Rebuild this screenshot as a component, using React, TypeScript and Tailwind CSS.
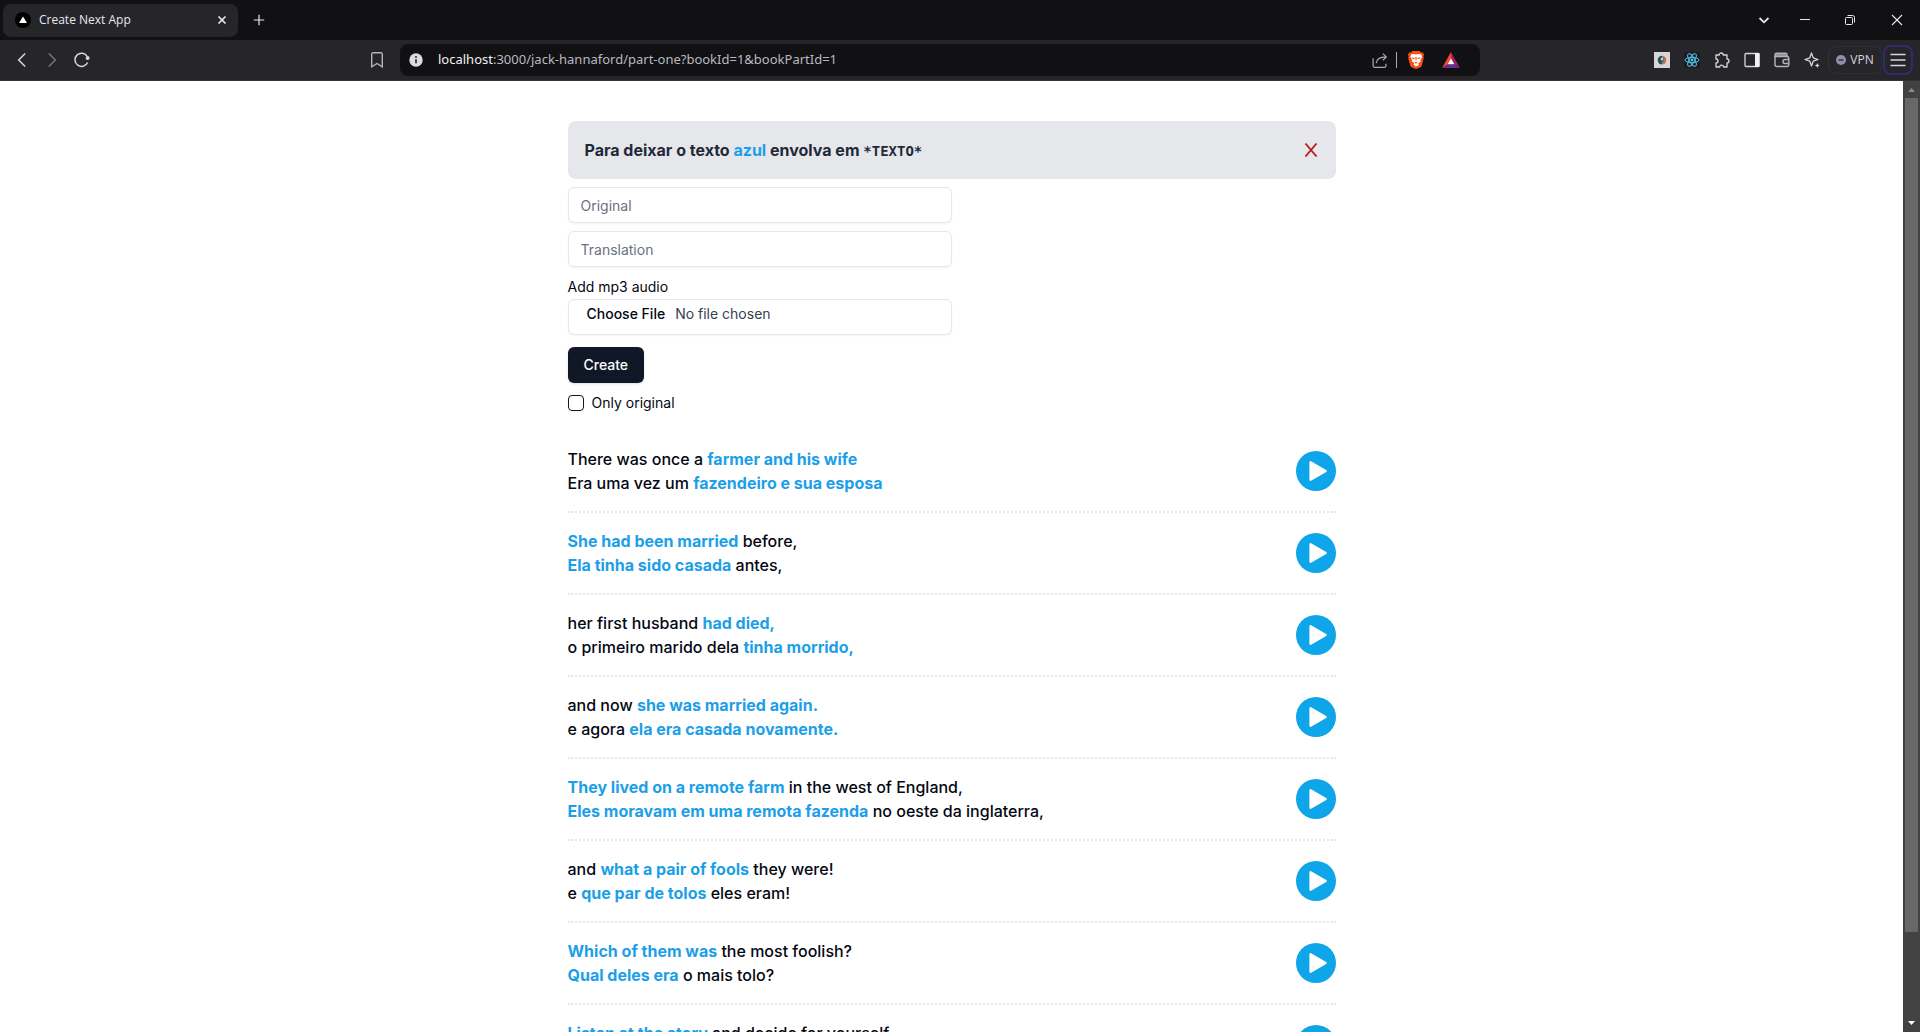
import React from "react";

type Part = [text: string, marked?: boolean];
type Phrase = { id: number; original: Part[]; translation: Part[] };

const phrases: Phrase[] = [
  {
    id: 1,
    original: [["There was once a "], ["farmer and his wife", true]],
    translation: [["Era uma vez um "], ["fazendeiro e sua esposa", true]],
  },
  {
    id: 2,
    original: [["She had been married", true], [" before,"]],
    translation: [["Ela tinha sido casada", true], [" antes,"]],
  },
  {
    id: 3,
    original: [["her first husband "], ["had died,", true]],
    translation: [["o primeiro marido dela "], ["tinha morrido,", true]],
  },
  {
    id: 4,
    original: [["and now "], ["she was married again.", true]],
    translation: [["e agora "], ["ela era casada novamente.", true]],
  },
  {
    id: 5,
    original: [["They lived on a remote farm", true], [" in the west of England,"]],
    translation: [["Eles moravam em uma remota fazenda", true], [" no oeste da inglaterra,"]],
  },
  {
    id: 6,
    original: [["and "], ["what a pair of fools", true], [" they were!"]],
    translation: [["e "], ["que par de tolos", true], [" eles eram!"]],
  },
  {
    id: 7,
    original: [["Which of them was", true], [" the most foolish?"]],
    translation: [["Qual deles era", true], [" o mais tolo?"]],
  },
  {
    id: 8,
    original: [["Listen at the story", true], [" and decide for yourself."]],
    translation: [["Ouça a história", true], [" e decida por si mesmo."]],
  },
];

function IconButton({ label, className = "", children }: { label: string; className?: string; children: React.ReactNode }) {
  return (
    <button type="button" aria-label={label} className={`flex shrink-0 items-center justify-center ${className}`}>
      {children}
    </button>
  );
}

function TabStrip() {
  return (
    <div className="flex h-10 shrink-0 items-center justify-between bg-[#111113] pl-[3px] text-[#e8e8ec]">
      <div className="flex items-center">
        <div className="flex h-[33px] w-[235px] items-center rounded-lg bg-[#26252a] pl-3 pr-2">
          <svg className="size-4 shrink-0" viewBox="0 0 16 16" aria-hidden="true">
            <circle cx="8" cy="8" r="8" fill="#000" />
            <path d="M8 4.500 12 11H4z" fill="#fff" />
          </svg>
          <span className="ml-2 grow font-['Open_Sans','Noto_Sans',sans-serif] text-xs">Create Next App</span>
          <IconButton label="Close tab" className="size-4">
            <svg className="size-4" viewBox="0 0 16 16" fill="none" stroke="currentColor" strokeWidth="1.700" aria-hidden="true">
              <path d="M4.500 4.500l7 7M11.500 4.500l-7 7" />
            </svg>
          </IconButton>
        </div>
        <IconButton label="New tab" className="ml-3 h-4 w-[18px]">
          <svg className="size-4" viewBox="0 0 16 16" fill="none" stroke="currentColor" strokeWidth="1.200" aria-hidden="true">
            <path d="M8 2.800v10.400M2.800 8h10.400" />
          </svg>
        </IconButton>
      </div>
      <div className="flex items-center">
        <IconButton label="Search tabs" className="size-10">
          <svg className="size-4" viewBox="0 0 16 16" fill="none" stroke="currentColor" strokeWidth="1.800" aria-hidden="true">
            <path d="M3.500 6 8 10.300 12.500 6" />
          </svg>
        </IconButton>
        <IconButton label="Minimize" className="h-10 w-[42px]">
          <svg className="size-4" viewBox="0 0 16 16" fill="none" stroke="currentColor" aria-hidden="true">
            <path d="M3 7.500h10" />
          </svg>
        </IconButton>
        <IconButton label="Restore" className="h-10 w-12">
          <svg className="size-4" viewBox="0 0 16 16" fill="none" stroke="currentColor" aria-hidden="true">
            <rect x="3.500" y="5.500" width="7" height="7" rx="1" />
            <path d="M5.500 3.500h5a2 2 0 0 1 2 2v5" />
          </svg>
        </IconButton>
        <IconButton label="Close" className="h-10 w-[46px]">
          <svg className="size-4" viewBox="0 0 16 16" fill="none" stroke="currentColor" strokeWidth="1.100" aria-hidden="true">
            <path d="M3 3l10 10M13 3 3 13" />
          </svg>
        </IconButton>
      </div>
    </div>
  );
}

function AddressBar() {
  return (
    <div className="flex h-8 w-[1080px] min-w-0 shrink items-center rounded-lg bg-[#111113] pl-2 pr-5">
      <svg className="size-4 shrink-0" viewBox="0 0 16 16" aria-hidden="true">
        <circle cx="8" cy="8" r="6.700" fill="#dcdce3" />
        <path d="M8 7.200v4" stroke="#111113" strokeWidth="1.500" />
        <circle cx="8" cy="5" r="0.900" fill="#111113" />
      </svg>
      <a
        href="#part-one"
        className="ml-3.5 min-w-0 grow truncate font-['Noto_Sans',sans-serif] text-[13px] text-[#b9b9c0]"
      >
        <span className="text-[#f0f0f4]">localhost</span>:3000/jack-hannaford/part-one?bookId=1&amp;bookPartId=1
      </a>
      <IconButton label="Share" className="size-4">
        <svg className="size-[17px]" viewBox="0 0 17 17" fill="none" stroke="#a9a9b0" strokeWidth="1.300" aria-hidden="true">
          <path d="M1.200 6v8.200a1.500 1.500 0 0 0 1.500 1.500h10.600a1.500 1.500 0 0 0 1.500-1.500V12" />
          <path d="M4.500 11.500c.3-4 2.500-6.600 10.300-6.800M11.500 1.200l3.700 3.500-3.700 3.500" />
        </svg>
      </IconButton>
      <span className="ml-2 mr-[11px] h-4 w-px bg-[#a9a9b0]" />
      <IconButton label="Brave Shields" className="h-[18px] w-4">
        <svg className="h-[18px] w-4" viewBox="0 0 16 18" aria-hidden="true">
          <path d="M4.500 0h7l1.600 1.600 1.700-.2 1.200 2.200-.6 1.800.4 1.400-2 7.700c-.3 1-1 1.500-1.700 2L8 18l-4.100-1.500c-.7-.5-1.400-1-1.700-2L.2 6.800l.4-1.400L0 3.600l1.200-2.200 1.700.2z" fill="#fb5013" />
          <path d="M3.300 3.300 6 3l2 .4L10 3l2.700.3 1.500 2.300-2 3.400.6 1.400-2.500 1.800.7 1.700L8 15.500l-2.500-1.900.7-1.700-2.500-1.800.6-1.400-2-3z" fill="#fff" />
          <path d="M3.600 6.200 6.600 7 6.300 8.300 4.500 7.800zM12.400 6.200 9.400 7l.3 1.300 1.800-.5zM7.300 6h1.400L8.400 9.500h-.8zM6.300 11.600 8 10.800l1.700.8L8 12.800z" fill="#fb5013" />
        </svg>
      </IconButton>
      <IconButton label="Brave Rewards" className="ml-[18px] h-4 w-[18px]">
        <svg className="h-4 w-[18px]" viewBox="0 0 18 16" aria-hidden="true">
          <path d="M9 0 0 16l5.600-3.800L9 6.200z" fill="#ff4724" />
          <path d="M9 0v6.200l3.400 6L18 16z" fill="#9e1f63" />
          <path d="M0 16h18l-5.600-3.800H5.600z" fill="#662d91" />
          <path d="M9 6.200 5.600 12.200h6.800z" fill="#fff" />
        </svg>
      </IconButton>
    </div>
  );
}

function Toolbar() {
  return (
    <div className="flex h-[41px] shrink-0 items-center justify-between border-b border-[#33323a] bg-[#26252a] pr-[7px] text-[#d6d6dc]">
      <div className="flex min-w-0 shrink items-center">
        <IconButton label="Back" className="ml-3.5 size-4">
          <svg className="size-4" viewBox="0 0 16 16" fill="none" stroke="currentColor" strokeWidth="1.500" aria-hidden="true">
            <path d="M11.200 1.500 4.700 8l6.500 6.500" />
          </svg>
        </IconButton>
        <IconButton label="Forward" className="ml-3.5 size-4 text-[#77767e]">
          <svg className="size-4" viewBox="0 0 16 16" fill="none" stroke="currentColor" strokeWidth="1.400" aria-hidden="true">
            <path d="M4.800 1.500 11.300 8l-6.500 6.500" />
          </svg>
        </IconButton>
        <IconButton label="Reload" className="ml-3.5 size-4">
          <svg className="size-4" viewBox="0 0 16 16" fill="none" stroke="currentColor" strokeWidth="1.500" aria-hidden="true">
            <path d="M13.600 10.500A6.600 6.600 0 1 1 13.300 4.500" />
            <circle cx="13.600" cy="6" r="2" fill="currentColor" stroke="none" />
          </svg>
        </IconButton>
        <IconButton label="Bookmark" className="ml-[279px] mr-[15px] size-4">
          <svg className="size-4" viewBox="0 0 16 16" fill="none" stroke="#b4b4bb" strokeWidth="1.400" aria-hidden="true">
            <path d="M2.700 14.800V2.200A1.500 1.500 0 0 1 4.200.8h7.600a1.500 1.500 0 0 1 1.500 1.400v12.600L8 11.500z" />
          </svg>
        </IconButton>
        <AddressBar />
      </div>
      <div className="flex shrink-0 items-center gap-3.5">
        <IconButton label="Extension" className="size-4">
          <svg className="size-4" viewBox="0 0 16 16" aria-hidden="true">
            <rect width="16" height="16" fill="#d8d5d4" />
            <path d="M8 3.800a4.300 4.300 0 1 0 0 8.600z" fill="#27505e" />
            <path d="M8 3.800a4.300 4.300 0 0 1 0 8.600z" fill="#c9713f" />
            <path d="M7 6.500 10.500 6 9.500 10 7 9.500z" fill="#2f6f9a" />
            <circle cx="8" cy="7" r="1.200" fill="#bfe3ea" />
          </svg>
        </IconButton>
        <IconButton label="React Developer Tools" className="size-4 bg-[#1d1d20]">
          <svg className="size-4" viewBox="0 0 16 16" fill="none" stroke="#4fc3e8" aria-hidden="true">
            <ellipse cx="8" cy="8" rx="7" ry="2.700" />
            <ellipse cx="8" cy="8" rx="7" ry="2.700" transform="rotate(60 8 8)" />
            <ellipse cx="8" cy="8" rx="7" ry="2.700" transform="rotate(120 8 8)" />
            <circle cx="8" cy="8" r="1.400" fill="#4fc3e8" stroke="none" />
          </svg>
        </IconButton>
        <IconButton label="Extensions" className="size-4">
          <svg className="size-4" viewBox="0 0 16 16" fill="none" stroke="currentColor" strokeWidth="1.300" strokeLinejoin="round" aria-hidden="true">
            <path d="M2 3h3.200a2 2 0 0 1 4 0H13v4a2 2 0 0 1 0 4v4H9.500a1.900 1.900 0 0 0-3.800 0H2v-4a2 2 0 0 0 0-4z" />
          </svg>
        </IconButton>
        <IconButton label="Sidebar" className="size-4">
          <svg className="size-4" viewBox="0 0 16 16" aria-hidden="true">
            <rect x="1" y="1.500" width="14" height="13" rx="1" fill="none" stroke="currentColor" strokeWidth="1.300" />
            <path d="M11 1h4.500v14H11z" fill="#f2f2f5" />
          </svg>
        </IconButton>
        <IconButton label="Wallet" className="size-4">
          <svg className="size-4" viewBox="0 0 16 16" fill="none" stroke="#b4b4bb" strokeWidth="1.400" aria-hidden="true">
            <path d="M1 4.500V3a1.700 1.700 0 0 1 1.700-1.700h8.600A1.700 1.700 0 0 1 13 3v1.500z" fill="#8f8f96" />
            <path d="M1 4v8.500a2 2 0 0 0 2 2h10a1.800 1.800 0 0 0 1.800-1.800V6A1.800 1.800 0 0 0 13 4.500" />
            <path d="M14.800 7.500H11a2 2 0 0 0 0 4h3.800" />
          </svg>
        </IconButton>
        <IconButton label="Leo AI" className="size-4">
          <svg className="size-4" viewBox="0 0 16 16" fill="none" stroke="currentColor" strokeWidth="1.300" strokeLinejoin="round" aria-hidden="true">
            <path d="M7.500 1 9.200 5.800 14 7.500 9.200 9.200 7.500 14 5.800 9.200 1 7.500 5.800 5.800z" />
            <path d="M13.300 11l.8 1.700 1.700.8-1.700.8-.8 1.700-.8-1.700-1.700-.8 1.700-.8z" fill="currentColor" stroke="none" />
          </svg>
        </IconButton>
        <div className="-ml-1.5 flex items-center">
          <button
            type="button"
            className="flex h-7 w-[54px] items-center justify-center gap-1 rounded-lg border border-[#302f36] font-['Open_Sans','Noto_Sans',sans-serif] text-xs"
          >
            <svg className="size-2.5" viewBox="0 0 10 10" aria-hidden="true">
              <circle cx="5" cy="5" r="5" fill="#8f8fa8" />
              <path d="M2.500 5h5" stroke="#26252a" strokeWidth="1.300" />
            </svg>
            VPN
          </button>
          <IconButton label="Menu" className="ml-px size-[30px] rounded-lg border-2 border-[#2f2c6e]">
            <svg className="size-4" viewBox="0 0 16 16" stroke="currentColor" strokeWidth="1.300" aria-hidden="true">
              <path d="M.5 2.500h15M.5 8h15M.5 13.500h15" />
            </svg>
          </IconButton>
        </div>
      </div>
    </div>
  );
}

function Scrollbar() {
  return (
    <div className="flex w-[17px] shrink-0 flex-col items-center bg-[#424242]" aria-hidden="true">
      <svg className="size-[17px] shrink-0" viewBox="0 0 17 17">
        <path d="M5 11h7L8.500 7z" fill="#8a8a8a" />
      </svg>
      <div className="w-[13px] grow-[10] bg-[#686868]" />
      <div className="grow" />
      <svg className="size-[17px] shrink-0" viewBox="0 0 17 17">
        <path d="M5 6h7L8.500 10z" fill="#fff" />
      </svg>
    </div>
  );
}

function Line({ parts }: { parts: Part[] }) {
  return (
    <p>
      {parts.map(([text, marked], i) =>
        marked ? (
          <strong key={i} className="font-bold text-[#1c9fe8]">
            {text}
          </strong>
        ) : (
          <span key={i}>{text}</span>
        ),
      )}
    </p>
  );
}

function PhraseRow({ phrase }: { phrase: Phrase }) {
  return (
    <li className="flex items-center justify-between border-b-2 border-dotted border-gray-200 py-4">
      <div className="font-medium">
        <Line parts={phrase.original} />
        <Line parts={phrase.translation} />
      </div>
      <IconButton label={`Play phrase ${phrase.id}`} className="size-10 rounded-full bg-[#0ea5e9]">
        <svg className="size-10" viewBox="0 0 40 40" aria-hidden="true">
          <path d="M14.500 11.200v17.600L29.700 20z" fill="#fff" stroke="#fff" strokeWidth="2.200" strokeLinejoin="round" />
        </svg>
      </IconButton>
    </li>
  );
}

const fieldClass =
  "h-9 w-full rounded-md border border-gray-200 bg-white px-3 py-1 text-sm shadow-xs placeholder:text-gray-500";

function PhraseForm() {
  return (
    <form className="mt-2 w-1/2">
      <input className={fieldClass} aria-label="Original" placeholder="Original" />
      <input className={`mt-2 ${fieldClass}`} aria-label="Translation" placeholder="Translation" />
      <label htmlFor="audio" className="mt-2 block py-0.5 text-sm">
        Add mp3 audio
      </label>
      <input
        id="audio"
        type="file"
        accept="audio/mpeg"
        className="h-9 w-full rounded-md border border-gray-200 bg-white px-3 py-1 text-sm text-gray-700 shadow-xs file:px-1.5 file:font-medium file:text-gray-950"
      />
      <button type="submit" className="mt-3 flex h-9 items-center rounded-md bg-gray-900 px-4 text-sm font-medium text-gray-50 shadow-sm">
        Create
      </button>
    </form>
  );
}

export default function App() {
  return (
    <div className="flex h-screen flex-col overflow-hidden">
      <TabStrip />
      <Toolbar />
      <div className="flex min-h-0 grow">
        <main className="min-w-0 grow overflow-hidden bg-white px-4 pt-10 font-['Inter',sans-serif] text-base text-gray-950">
          <div className="mx-auto max-w-3xl">
            <div className="flex h-[58px] items-center justify-between rounded-lg bg-gray-200 pl-[17px] pr-[15px] font-bold text-gray-800">
              <p>
                Para deixar o texto <span className="text-[#1c9fe8]">azul</span> envolva em{" "}
                <code className="font-['DejaVu_Sans_Mono',monospace] text-sm">*TEXTO*</code>
              </p>
              <IconButton label="Dismiss" className="size-5">
                <svg className="size-5" viewBox="0 0 20 20" fill="none" stroke="#b91c1c" strokeWidth="1.900" aria-hidden="true">
                  <path d="M4.500 3.500 15.500 16.500M15.500 3.500 4.500 16.500" />
                </svg>
              </IconButton>
            </div>
            <PhraseForm />
            <div className="mt-3 flex items-center gap-2 text-sm">
              <input
                id="only-original"
                type="checkbox"
                className="size-4 appearance-none rounded-sm border border-gray-900 bg-white shadow-xs checked:bg-gray-900"
              />
              <label htmlFor="only-original" className="leading-4">
                Only original
              </label>
            </div>
            <ul className="mt-5">
              {phrases.map((phrase) => (
                <PhraseRow key={phrase.id} phrase={phrase} />
              ))}
            </ul>
          </div>
        </main>
        <Scrollbar />
      </div>
    </div>
  );
}
